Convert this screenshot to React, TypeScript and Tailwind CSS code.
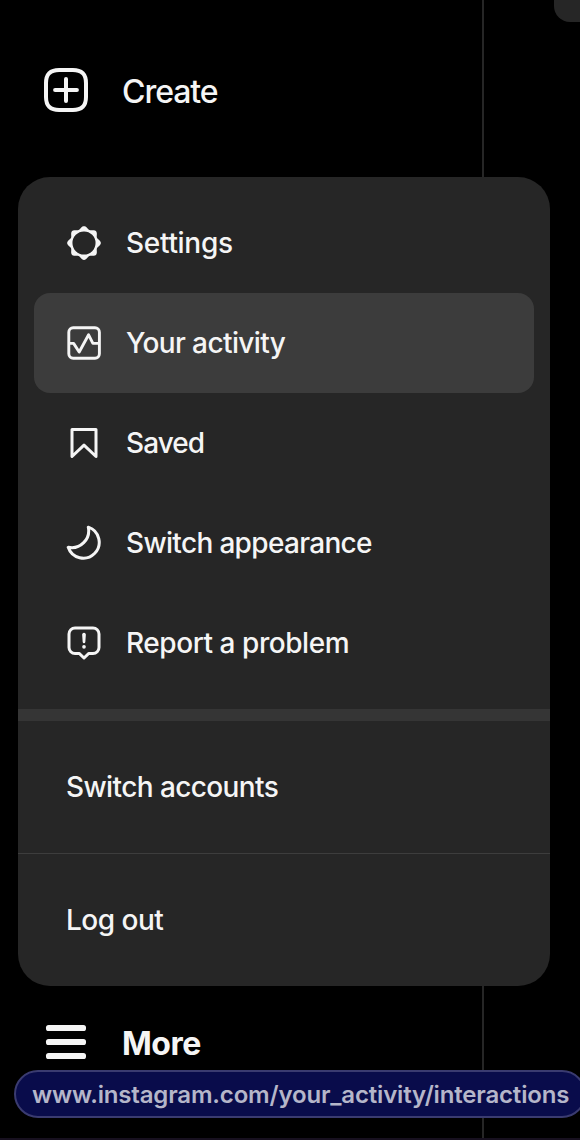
import type { ReactNode } from "react";

const CreateIcon = () => (
  <svg viewBox="0 0 24 24" className="size-12" fill="none" stroke="currentColor" strokeWidth="2" strokeLinecap="round" strokeLinejoin="round">
    <path d="M2 12v3.45c0 2.849.698 4.005 1.606 4.944.94.909 2.098 1.608 4.946 1.608h6.896c2.848 0 4.006-.7 4.946-1.608C21.302 19.455 22 18.3 22 15.45V8.552c0-2.849-.698-4.006-1.606-4.945C19.454 2.7 18.296 2 15.448 2H8.552c-2.848 0-4.006.699-4.946 1.607C2.698 4.547 2 5.703 2 8.552Z" />
    <path d="M6.545 12h10.91M12 6.545v10.91" />
  </svg>
);

// Gear rim: eight soft lobes around a ring.
const gearRim = Array.from({ length: 96 }, (_, i) => {
  const angle = (i / 96) * Math.PI * 2;
  const radius = 10.3 + 0.95 * Math.cos(8 * angle);
  return `${(12 + radius * Math.cos(angle)).toFixed(2)} ${(12 + radius * Math.sin(angle)).toFixed(2)}`;
}).join("L");

const SettingsIcon = () => (
  <svg viewBox="0 0 24 24" className="size-9" fill="currentColor" fillRule="evenodd">
    <path d={`M${gearRim}ZM12 4.3a7.7 7.7 0 1 0 0 15.4a7.7 7.7 0 1 0 0-15.4Z`} />
  </svg>
);

const ActivityIcon = () => (
  <svg viewBox="0 0 36 36" className="size-9" fill="none" stroke="currentColor" strokeWidth="2.9" strokeLinejoin="round">
    <rect x="2.8" y="2.8" width="30.6" height="30.4" rx="4.4" />
    <path d="M3 18.4h4.6L13.2 27 22.6 9.8l4.3 8.6H33" />
  </svg>
);

const SavedIcon = () => (
  <svg viewBox="0 0 24 24" className="size-9" fill="none" stroke="currentColor" strokeWidth="2" strokeLinecap="round" strokeLinejoin="round">
    <path d="M20 21l-8-7.56L4 21V3h16Z" />
  </svg>
);

const MoonIcon = () => (
  <svg viewBox="0 0 36 36" className="size-9" fill="none" stroke="currentColor" strokeWidth="3" strokeLinejoin="round">
    <path d="M22.3 2.2A15.9 15.9 0 1 1 2.2 22.3 17 17 0 0 0 22.3 2.2Z" />
  </svg>
);

const ReportIcon = () => (
  <svg viewBox="0 0 24 24" className="size-9" fill="currentColor">
    <path d="M18.001 1h-12a5.006 5.006 0 0 0-5 5v9.005a5.006 5.006 0 0 0 5 5h2.514l2.789 2.712a1 1 0 0 0 1.394 0l2.787-2.712h2.516a5.006 5.006 0 0 0 5-5V6a5.006 5.006 0 0 0-5-5Zm3 14.005a3.003 3.003 0 0 1-3 3h-2.936a1 1 0 0 0-.697.283l-2.367 2.302-2.369-2.302a1 1 0 0 0-.697-.283H6.001a3.003 3.003 0 0 1-3-3V6a3.003 3.003 0 0 1 3-3h12a3.003 3.003 0 0 1 3 3Zm-9-1.66a1.229 1.229 0 1 0 1.228 1.228 1.23 1.23 0 0 0-1.228-1.228Zm0-8.117a1.274 1.274 0 0 0-.933.396 1.108 1.108 0 0 0-.3.838l.347 4.861a.892.892 0 0 0 1.77 0l.348-4.86a1.106 1.106 0 0 0-.3-.838 1.272 1.272 0 0 0-.932-.397Z" />
  </svg>
);

const MoreIcon = () => (
  <svg viewBox="0 0 48 48" className="size-12" fill="currentColor">
    <rect x="4" y="7" width="40" height="6" rx="2.6" />
    <rect x="4" y="21" width="40" height="6" rx="2.6" />
    <rect x="4" y="35" width="40" height="6" rx="2.6" />
  </svg>
);

type Item = { label: string; icon: ReactNode; tracking: string; active?: boolean };

const items: Item[] = [
  { label: "Settings", icon: <SettingsIcon />, tracking: "tracking-[-0.3px]" },
  { label: "Your activity", icon: <ActivityIcon />, tracking: "tracking-[-0.6px]", active: true },
  { label: "Saved", icon: <SavedIcon />, tracking: "tracking-[-0.95px]" },
  { label: "Switch appearance", icon: <MoonIcon />, tracking: "tracking-[-0.67px]" },
  { label: "Report a problem", icon: <ReportIcon />, tracking: "tracking-[-0.45px]" },
];

export default function App() {
  return (
    <div className="relative flex h-[1140px] w-[580px] flex-col overflow-hidden bg-black font-['Inter',sans-serif] text-[#f5f5f5]">
      <div className="flex h-[1138px] justify-between">
        <nav className="flex w-[484px] shrink-0 flex-col border-r-2 border-[#262626]">
          <a className="mt-[66px] ml-[42px] flex h-12 items-center gap-8">
            <CreateIcon />
            <span className="mt-1 text-[32px] leading-10 font-[450] tracking-[-1.05px]">Create</span>
          </a>

          <div className="mt-[63px] ml-[18px] w-[532px] shrink-0 overflow-hidden rounded-[32px] bg-[#262626] text-[28px] leading-9 font-[450]">
            <div className="p-4">
              {items.map((item) => (
                <a
                  key={item.label}
                  className={`flex h-[100px] items-center gap-6 rounded-2xl px-8 ${item.active ? "bg-[#3c3c3c]" : ""}`}
                >
                  {item.icon}
                  <span className={`whitespace-nowrap ${item.tracking}`}>{item.label}</span>
                </a>
              ))}
            </div>
            <div className="h-3 bg-[#353535]" />
            <div className="flex h-[132px] items-center px-12 tracking-[-0.6px]">Switch accounts</div>
            <div className="h-px bg-[#3d3d3d]" />
            <div className="flex h-[132px] items-center px-12 tracking-[-0.5px]">Log out</div>
          </div>

          <a className="mt-8 ml-[42px] flex h-12 items-center gap-8">
            <MoreIcon />
            <span className="mt-1 text-[32px] leading-10 font-bold tracking-[-0.5px]">More</span>
          </a>
        </nav>
        <div className="h-[22px] w-[26px] rounded-bl-2xl bg-[#262626]" />
      </div>
      <div className="h-0.5 bg-[#17101f]" />

      <div className="absolute top-[1070px] left-[14px] flex h-12 w-[572px] items-center rounded-full border-2 border-[#3a3b70] bg-[#090c4b] pt-0.5 pl-4 text-[24px] font-semibold tracking-[-0.17px] whitespace-nowrap text-[#b5b6c9]">
        www.instagram.com/your_activity/interactions
      </div>
    </div>
  );
}
